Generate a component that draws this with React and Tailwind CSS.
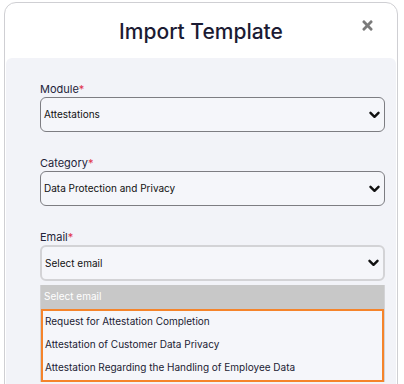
import { FaTimes } from "react-icons/fa";

function Chevron() {
  return (
    <svg width="11" height="8" viewBox="0 0 11 8" className="shrink-0">
      <path d="M1.5 1.8 L5.5 5.8 L9.5 1.8" fill="none" stroke="#111" strokeWidth="2.4" strokeLinecap="round" strokeLinejoin="round" />
    </svg>
  );
}

function FieldLabel({ children }) {
  return (
    <div className="h-[16px] text-[11px] leading-[16px] text-[#23233a]">
      {children}
      <span className="text-[#e0314b]">*</span>
    </div>
  );
}

function SelectBox({ value, focused }) {
  return (
    <div
      className={`flex items-center justify-between rounded-[6px] bg-[#f5f6fa] pl-[3px] pr-[4px] text-[10px] text-[#111] ${
        focused ? "h-[36px] border-2 border-[#d3d3d6]" : "h-[35px] border border-[#7d7d82]"
      }`}
    >
      <span>{value}</span>
      <Chevron />
    </div>
  );
}

const emailOptions = [
  "Request for Attestation Completion",
  "Attestation of Customer Data Privacy",
  "Attestation Regarding the Handling of Employee Data",
];

export default function App() {
  return (
    <div className="h-[384px] w-[404px] overflow-hidden bg-white pl-[4px] pt-[2px]" style={{ fontFamily: "Inter, 'Noto Sans', sans-serif" }}>
      <div className="h-[420px] w-[394px] rounded-[12px] border border-[#cfcfd3] bg-white">
        <div className="relative flex h-[55px] items-center justify-center">
          <h1 className="pt-[2px] text-[21px] font-medium text-[#1b1b33]">Import Template</h1>
          <FaTimes className="absolute right-[22px] top-[15px] text-[#7b7b7b]" size={15} />
        </div>
        <div className="mx-[1px] rounded-t-[6px] bg-[#f2f3f8] pb-[40px] pl-[34px] pr-[11px] pt-[23px]">
          <div className="flex flex-col gap-[23px]">
            <div>
              <FieldLabel>Module</FieldLabel>
              <SelectBox value="Attestations" />
            </div>
            <div>
              <FieldLabel>Category</FieldLabel>
              <SelectBox value="Data Protection and Privacy" />
            </div>
            <div>
              <FieldLabel>Email</FieldLabel>
              <SelectBox value="Select email" focused />
              <div className="mt-[4px] border-x border-[#d3d3d6] bg-[#f5f6fa] text-[10px]">
                <div className="flex h-[24px] items-center bg-[#c8c8c8] px-[3px] pb-[1px] text-white">Select email</div>
                <div className="border-2 border-[#f5842b]">
                  {emailOptions.map((opt) => (
                    <div key={opt} className="flex h-[23px] items-center px-[2px] pb-[2px] text-[#1b1b33]">
                      {opt}
                    </div>
                  ))}
                </div>
              </div>
            </div>
          </div>
        </div>
      </div>
    </div>
  );
}
